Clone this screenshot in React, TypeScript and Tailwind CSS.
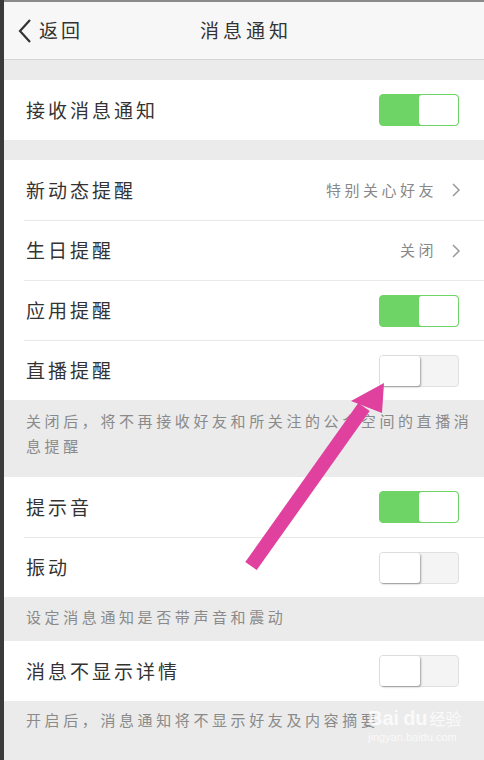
import React from "react";

const font = { fontFamily: '"Noto Sans CJK SC", "Noto Sans", sans-serif' };

function Toggle({ on }: { on: boolean }) {
  if (on) {
    return (
      <div className="flex h-[32px] w-[80px] overflow-hidden rounded-[4px] border border-[#6fd466] bg-[#6fd466]">
        <div className="w-[39px]" />
        <div className="flex-1 rounded-[3px] bg-white" />
      </div>
    );
  }
  return (
    <div className="flex h-[32px] w-[80px] rounded-[4px] border border-[#e0e0e0] bg-[#f4f4f4]">
      <div className="w-[40px] rounded-[3px] bg-white shadow-[1px_1px_2px_rgba(0,0,0,0.35)]" />
    </div>
  );
}

function Row({
  label,
  value,
  toggle,
  divider,
}: {
  label: string;
  value?: string;
  toggle?: boolean;
  divider?: boolean;
}) {
  return (
    <div className="pl-[20px]">
      <div
        className={`flex h-[60px] items-center pr-[25px] ${divider ? "border-t border-[#e8e8e8]" : ""}`}
      >
        <span className="flex-1 pl-[2px] text-[19px] tracking-[3px] text-[#333]">{label}</span>
        {value !== undefined && (
          <div className="flex items-center">
            <span className="text-[15px] tracking-[3.5px] text-[#888]">{value}</span>
            <svg width="10" height="16" viewBox="0 0 10 16" className="ml-[14px] mr-[-2px]">
              <path d="M2 2 L8 8 L2 14" fill="none" stroke="#9a9a9a" strokeWidth="1.5" />
            </svg>
          </div>
        )}
        {toggle !== undefined && <Toggle on={toggle} />}
      </div>
    </div>
  );
}

function Note({ children, className }: { children: React.ReactNode; className: string }) {
  return (
    <div
      className={`whitespace-nowrap pl-[22px] pr-[6px] text-[15px] leading-[25px] tracking-[3.6px] text-[#8a8a8a] ${className}`}
    >
      {children}
    </div>
  );
}

export default function App() {
  return (
    <div className="relative h-[760px] w-[484px] overflow-hidden bg-[#3a3a3a] pl-[4px]" style={font}>
      <div className="h-full bg-[#ebebeb]">
        <div className="h-[2px] bg-[#8a8a8a]" />
        <div className="relative flex h-[58px] items-center border-b border-[#d6d6d6] bg-[#f7f7f7]">
          <div className="flex items-center pl-[13px]">
            <svg width="16" height="28" viewBox="0 0 16 28">
              <path d="M13 3 L3 14 L13 25" fill="none" stroke="#333" strokeWidth="2.2" />
            </svg>
            <span className="ml-[6px] text-[19px] tracking-[3px] text-[#333]">返回</span>
          </div>
          <span className="absolute left-[196px] text-[19px] tracking-[4px] text-[#333]">消息通知</span>
        </div>

        <div className="mt-[20px] bg-white">
          <Row label="接收消息通知" toggle={true} />
        </div>

        <div className="mt-[20px] bg-white">
          <Row label="新动态提醒" value="特别关心好友" />
          <Row label="生日提醒" value="关闭" divider />
          <Row label="应用提醒" toggle={true} divider />
          <Row label="直播提醒" toggle={false} divider />
        </div>
        <Note className="h-[77px] pt-[8px]">
          关闭后，将不再接收好友和所关注的公众空间的直播消
          <br />
          息提醒
        </Note>

        <div className="bg-white">
          <Row label="提示音" toggle={true} />
          <Row label="振动" toggle={false} divider />
        </div>
        <Note className="h-[44px] pt-[7px]">设定消息通知是否带声音和震动</Note>

        <div className="bg-white">
          <Row label="消息不显示详情" toggle={false} />
        </div>
        <Note className="pt-[6px]">开启后，消息通知将不显示好友及内容摘要</Note>
      </div>

      {/* watermark */}
      <div className="absolute left-[368px] top-[706px] flex flex-col items-start text-white/75">
        <span className="whitespace-nowrap text-[20px] font-bold leading-[24px]" style={{ fontFamily: '"Liberation Sans", sans-serif' }}>
          Bai<span className="ml-[4px]">du</span>
          <span className="ml-[2px] text-[16px] font-normal" style={font}>经验</span>
        </span>
        <span className="text-[11px] leading-[14px]" style={{ fontFamily: '"Liberation Sans", sans-serif' }}>
          jingyan.baidu.com
        </span>
      </div>

      {/* annotation arrow */}
      <svg className="absolute left-0 top-0" width="484" height="760" viewBox="0 0 484 760">
        <line x1="251" y1="566" x2="364" y2="407" stroke="#e0409e" strokeWidth="14" />
        <polygon points="384,383 351,401 382,413" fill="#e0409e" />
      </svg>
    </div>
  );
}
